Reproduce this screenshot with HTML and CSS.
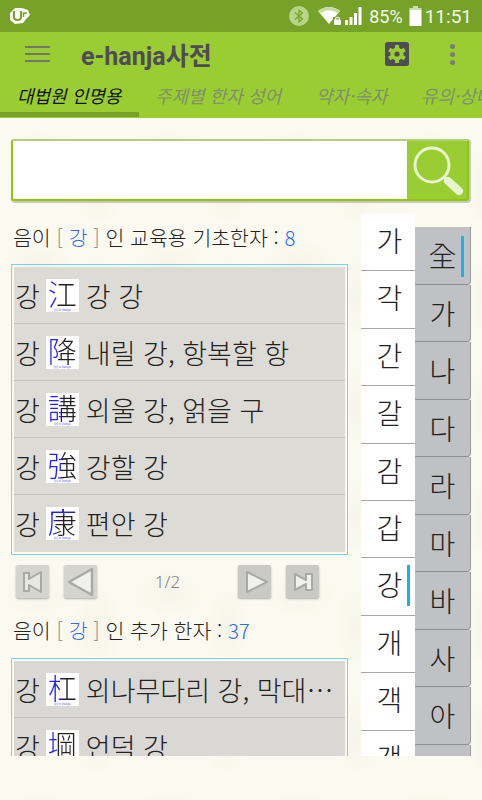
FILE: index.html
```html
<!DOCTYPE html>
<html lang="ko">
<head>
  <meta charset="UTF-8" />
  <meta name="viewport" content="width=device-width, initial-scale=1.0"/>
  <title>e-hanja사전</title>
  <link rel="stylesheet" href="styles.css">
</head>
<body>

  <!-- STATUS BAR -->
  <div class="status-bar">
    <svg class="st-logo" width="22" height="18" viewBox="0 0 22 18">
      <path d="M2 6 L7 1 H14 L20 3 L22 8 L18 12 L15 16 L7 17 L2 13 Z" fill="#fff"/>
      <path d="M6 4 V10 Q6 13 9.5 13 Q13 13 13 10 V4" fill="none" stroke="#76a22a" stroke-width="2"/>
      <path d="M15.5 10 V6 H19" fill="none" stroke="#76a22a" stroke-width="1.6"/>
    </svg>
    <div class="st-right">
      <svg width="20" height="20" viewBox="0 0 20 20" class="st-bt">
        <circle cx="10" cy="10" r="10" fill="#b7d48a"/>
        <path d="M6 6.5 L13.5 13 L10 16 V4 L13.5 7 L6 13.5" fill="none" stroke="#76a22a" stroke-width="1.2"/>
      </svg>
      <svg width="24" height="20" viewBox="0 0 24 20" class="st-wifi">
        <path d="M0 5 Q11 -3 22 5 L11 18 Z" fill="#fff"/>
        <path d="M0 5 Q11 -3 22 5 L20 7.5 Q11 1 2 7.5 Z" fill="#c5dba0"/>
        <rect x="15" y="11" width="9" height="8" fill="#76a22a"/>
        <rect x="16" y="13.5" width="7" height="5.5" rx="1" fill="#fff"/>
        <path d="M17.7 14 V12.2 Q19.5 10.4 21.3 12.2 V14" fill="none" stroke="#fff" stroke-width="1.1"/>
      </svg>
      <svg width="20" height="20" viewBox="0 0 20 20" class="st-signal">
        <rect x="1" y="14" width="3" height="5" fill="#fff"/>
        <rect x="5.5" y="11" width="3" height="8" fill="#fff"/>
        <rect x="10" y="7" width="3" height="12" fill="#fff"/>
        <rect x="14.5" y="1" width="3" height="18" fill="#fff"/>
      </svg>
      <span class="st-pct">85%</span>
      <svg width="13" height="20" viewBox="0 0 13 20" class="st-batt">
        <rect x="4" y="0" width="5" height="2" fill="#cfe0b0"/>
        <rect x="0.5" y="2" width="12" height="3" fill="#cfe0b0"/>
        <rect x="0.5" y="4" width="12" height="16" fill="#fff"/>
      </svg>
      <span class="st-time">11:51</span>
    </div>
  </div>

  <!-- APP BAR -->
  <header class="app-bar">
    <div class="app-top">
      <div class="burger"><i></i><i></i><i></i></div>
      <h1>e-hanja사전</h1>
      <svg class="gear" width="24" height="24" viewBox="0 0 24 24">
        <rect width="24" height="24" rx="2.5" fill="#4f4b57"/>
        <circle cx="12" cy="12" r="6.5" fill="#9acd32"/>
        <path d="M12 3 V21 M4.2 7.5 L19.8 16.5 M4.2 16.5 L19.8 7.5" stroke="#9acd32" stroke-width="4"/>
        <circle cx="12" cy="12" r="2.6" fill="#4f4b57"/>
      </svg>
      <div class="dots"><i></i><i></i><i></i></div>
    </div>
    <nav class="tabs">
      <div class="tab active">대법원 인명용</div>
      <div class="tab t2">주제별 한자 성어</div>
      <div class="tab t3">약자·속자</div>
      <div class="tab t4">유의·상대</div>
    </nav>
  </header>

  <!-- CONTENT -->
  <main class="content">
    <div class="search-box">
      <div class="search-input"></div>
      <div class="search-btn">
        <svg width="54" height="54" viewBox="0 0 54 54">
          <circle cx="22" cy="21" r="17" fill="none" stroke="#e8f3cf" stroke-width="3"/>
          <path d="M34 33 L38 37" stroke="#e8f3cf" stroke-width="3"/>
          <path d="M38 37 L49 47" stroke="#e8f3cf" stroke-width="8" stroke-linecap="round"/>
        </svg>
      </div>
    </div>

    <div class="columns">
      <div class="results">
        <p class="count">음이 <span class="br">[</span> <span class="blue">강</span> <span class="br">]</span> 인 교육용 기초한자 : <span class="blue">8</span></p>
        <ul class="list">
          <li><span>강</span><b class="hj"><span class="left36">江</span><em>(c) e-hanja</em></b><span>강 강</span></li>
          <li><span>강</span><b class="hj"><span class="left36">降</span><em>(c) e-hanja</em></b><span>내릴 강, 항복할 항</span></li>
          <li><span>강</span><b class="hj"><span class="left46">講</span><em>(c) e-hanja</em></b><span>외울 강, 얽을 구</span></li>
          <li><span>강</span><b class="hj"><span class="left46">強</span><em>(c) e-hanja</em></b><span>강할 강</span></li>
          <li><span>강</span><b class="hj"><span class="roof">康</span><em>(c) e-hanja</em></b><span>편안 강</span></li>
        </ul>

        <div class="pager">
          <button class="pg off">
            <svg width="28" height="28" viewBox="0 0 28 28"><path d="M5 5 H10 V11 L22 4 V24 L10 17 V23 H5 Z" fill="#e8e8e3" stroke="#a9a9a5" stroke-width="2" stroke-linejoin="round"/></svg>
          </button>
          <button class="pg off pg-prev">
            <svg width="30" height="30" viewBox="0 0 30 30"><path d="M3 15 L26 2 V28 Z" fill="#f0f0ec" stroke="#a9a9a5" stroke-width="2.5" stroke-linejoin="round"/></svg>
          </button>
          <span class="pg-num">1/2</span>
          <button class="pg on">
            <svg width="28" height="28" viewBox="0 0 28 28"><path d="M6 4 L26 14 L6 24 Z" fill="#f0f0ec" stroke="#a9a9a5" stroke-width="2" stroke-linejoin="round"/></svg>
          </button>
          <button class="pg on pg-last">
            <svg width="28" height="28" viewBox="0 0 28 28"><path d="M6 6 L17 12 V6 H23 V22 H17 V16 L6 22 Z" fill="#f0f0ec" stroke="#a9a9a5" stroke-width="2" stroke-linejoin="round"/></svg>
          </button>
        </div>

        <p class="count count2">음이 <span class="br">[</span> <span class="blue">강</span> <span class="br">]</span> 인 추가 한자 : <span class="blue">37</span></p>
        <ul class="list">
          <li class="plain"><span>강</span><b class="hj"><span class="left46">杠</span><em>(c) e-hanja</em></b><span>외나무다리 강, 막대…</span></li>
          <li class="plain"><span>강</span><b class="hj"><span class="left36">堈</span><em>(c) e-hanja</em></b><span>언덕 강</span></li>
        </ul>
      </div>

      <div class="syllables">
        <div class="syl">가</div>
        <div class="syl">각</div>
        <div class="syl">간</div>
        <div class="syl">갈</div>
        <div class="syl">감</div>
        <div class="syl">갑</div>
        <div class="syl sel">강</div>
        <div class="syl">개</div>
        <div class="syl">객</div>
        <div class="syl">갱</div>
      </div>

      <div class="index-tabs">
        <div class="idx sel">全</div>
        <div class="idx">가</div>
        <div class="idx">나</div>
        <div class="idx">다</div>
        <div class="idx">라</div>
        <div class="idx">마</div>
        <div class="idx">바</div>
        <div class="idx">사</div>
        <div class="idx">아</div>
        <div class="idx">자</div>
      </div>
    </div>
  </main>

</body>
</html>
```

FILE: styles.css
```css
* {
  box-sizing: border-box;
  margin: 0;
  padding: 0;
}
html, body {
  height: 800px;
  overflow: hidden;
}
body {
  background-color: #fbfaf0;
  /* faint paper texture */
  background-image:
    radial-gradient(ellipse 40px 25px at 30% 40%, rgba(190,185,150,0.07), transparent),
    radial-gradient(ellipse 25px 45px at 75% 70%, rgba(190,185,150,0.07), transparent);
  background-size: 130px 110px;
  font-family: "Noto Sans CJK KR", "Roboto", sans-serif;
  color: #222;
}

/* === STATUS BAR === */
.status-bar {
  display: flex;
  align-items: center;
  justify-content: space-between;
  height: 32px;
  padding: 0 10px 0 8px;
  background: #76a22a;
  color: #fff;
}
.st-right {
  display: flex;
  align-items: center;
}
.st-right span {
  font-family: "Roboto", sans-serif;
  color: #f4f8ea;
}
.st-pct { font-size: 18px; }
.st-time { font-size: 19px; }
.st-bt { margin-right: 9px; }
.st-wifi { margin-right: 2px; }
.st-signal { margin-right: 5px; }
.st-batt { margin: 0 3px 0 6px; }

/* === APP BAR === */
.app-bar {
  background: #9acd32;
  height: 86px;
}
.app-top {
  display: flex;
  align-items: center;
  height: 44px;
  padding: 0 0 0 25px;
}
.burger {
  width: 25px;
  display: flex;
  flex-direction: column;
  gap: 5px;
}
.burger i {
  display: block;
  height: 2px;
  background: #727570;
}
.app-top h1 {
  flex: 1;
  margin-left: 31px;
  font-family: "Roboto", "Noto Sans CJK KR", sans-serif;
  font-size: 25px;
  font-weight: 700;
  color: #4f4b57;
}
.gear { margin-right: 41px; }
.dots {
  display: flex;
  flex-direction: column;
  gap: 3px;
  margin-right: 27px;
}
.dots i {
  display: block;
  width: 5px;
  height: 5px;
  border-radius: 50%;
  background: #7b7982;
}
.tabs {
  display: flex;
  height: 42px;
  overflow: hidden;
  white-space: nowrap;
}
.tab {
  flex: none;
  height: 41px;
  padding-top: 7px;
  font-size: 18px;
  font-style: italic;
  line-height: 25px;
  color: #80906a;
}
.tab.active {
  width: 139px;
  padding-left: 17px;
  color: #111;
  border-bottom: 5px solid #76a22a;
}
.t2 { margin-left: 16px; width: 129px; }
.t3 { margin-left: 32px; width: 71px; }
.t4 { margin-left: 34px; }

/* === CONTENT === */
.content {
  height: 638px;
  padding: 21px 0 0 0;
  overflow: hidden;
}
.search-box {
  display: flex;
  width: 458px;
  height: 62px;
  margin-left: 11px;
  border: 2px solid #93c40a;
  border-top-color: #b3cf80;
  border-radius: 3px;
  background: #fff;
  box-shadow: 1px 1px 0 1px #c6c8c0;
}
.search-input { flex: 1; }
.search-btn {
  width: 60px;
  background: #9acd32;
  padding: 3px 0 0 3px;
}

.columns {
  display: flex;
  height: 542px;
  margin-top: 13px;
  overflow: hidden;
}
.results {
  width: 361px;
  padding: 0 0 0 11px;
}
.count {
  margin-top: 6px;
  height: 38px;
  font-size: 20.5px;
  font-weight: 300;
  line-height: 34px;
  color: #222;
  padding-left: 2px;
  white-space: nowrap;
}
.count2 {
  margin-top: 5px;
  height: 39px;
}
.blue { color: #2f6cf0; }
.br { color: #888; }

.list {
  list-style: none;
  width: 337px;
  margin-top: 6px;
  border: 1px solid #7fd0ea;
  padding: 2px;
}
.list li {
  display: flex;
  align-items: center;
  height: 57px;
  padding-left: 1px;
  font-size: 27px;
  font-weight: 300;
  background: #dddbd5;
  border-bottom: 1px solid #c6c4bd;
  white-space: nowrap;
}
.list li:last-child { border-bottom: 0; }
.list li.plain { background: #d9d8d5; }

/* hanja image: white tile, coloured radical, tiny caption */
.hj {
  position: relative;
  display: block;
  flex: none;
  width: 33px;
  height: 33px;
  margin: 0 7px 0 6px;
  background: #fff;
  font-family: "Noto Sans CJK TC", sans-serif;
  font-size: 29px;
  font-weight: 300;
  line-height: 29px;
  text-align: center;
}
.hj span {
  display: block;
  height: 29px;
  color: transparent;
  -webkit-background-clip: text;
  background-clip: text;
}
.hj em {
  position: absolute;
  left: 0;
  right: 0;
  bottom: 0;
  font-family: "Liberation Sans", sans-serif;
  font-size: 3.5px;
  font-style: normal;
  font-weight: 400;
  line-height: 4px;
  color: #5a5aee;
}
.left36 { background-image: linear-gradient(90deg, #2222ee 36%, #222 36%); }
.left46 { background-image: linear-gradient(90deg, #2222ee 46%, #222 46%); }
.roof {
  background-image:
    linear-gradient(180deg, #2222ee 28%, transparent 28%),
    linear-gradient(90deg, #2222ee 30%, #222 30%);
}

/* === PAGER === */
.pager {
  display: flex;
  align-items: center;
  height: 53px;
  padding-left: 5px;
}
.pg {
  display: flex;
  align-items: center;
  justify-content: center;
  width: 33px;
  height: 33px;
  border: none;
  border-radius: 2px;
  background: #d5d5d0;
  box-shadow: 0 1px 2px rgba(0,0,0,0.3);
}
.pg.on { background: #c9c9c5; }
.pg-prev { margin-left: 15px; }
.pg-num {
  width: 141px;
  text-align: center;
  font-family: "Noto Sans", sans-serif;
  font-size: 17px;
  color: #808080;
  font-weight: 300;
}
.pg-last { margin-left: 15px; }

/* === SYLLABLE COLUMN === */
.syllables {
  width: 54px;
  flex: none;
}
.syl {
  position: relative;
  height: 57.4px;
  padding: 3px 0 0 3px;
  background: #fff;
  border-bottom: 1px solid #a8a8a8;
  text-align: center;
  font-size: 28px;
  font-weight: 300;
  line-height: 46px;
}
.syl.sel::after,
.idx.sel::after {
  content: "";
  position: absolute;
  top: 7px;
  right: 5px;
  width: 3px;
  height: 41px;
  background: #1ab0ee;
}
.idx.sel::after {
  top: 9px;
  right: 6px;
}

/* === INDEX TABS === */
.index-tabs {
  width: 56px;
  flex: none;
  padding-top: 13px;
}
.idx {
  position: relative;
  height: 57.5px;
  padding-top: 5px;
  background: #bfc1c4;
  border-right: 1px solid #9b9c9f;
  border-bottom: 1px solid #8e8f92;
  border-radius: 0 0 4px 0;
  text-align: center;
  font-size: 28px;
  font-weight: 300;
  line-height: 46px;
}
```
